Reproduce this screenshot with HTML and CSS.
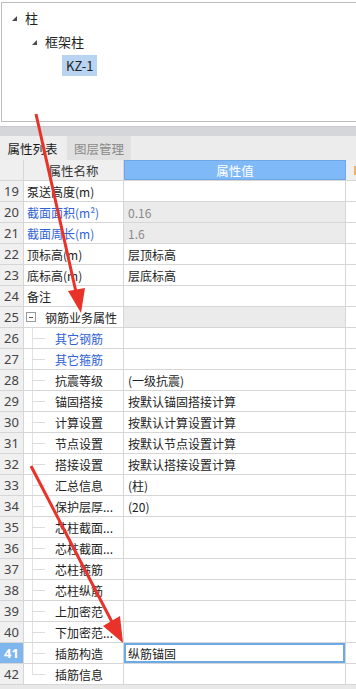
FILE: index.html
```html
<!DOCTYPE html>
<html lang="zh-CN">
<head>
    <meta charset="UTF-8">
    <title>属性列表</title>
    <link rel="stylesheet" href="styles.css">
</head>
<body>
<div class="tree">
    <div class="node"><span class="caret"></span>柱</div>
    <div class="node level1"><span class="caret"></span>框架柱</div>
    <div class="node level2"><span class="selected">KZ-1</span></div>
</div>
<div class="splitter"></div>
<div class="tabs">
    <div class="tab active">属性列表</div>
    <div class="tab">图层管理</div>
</div>
<div class="grid">
    <div class="row head">
        <div class="num"></div>
        <div class="name">属性名称</div>
        <div class="val">属性值</div>
        <div class="pad"><span class="mark"></span></div>
    </div>
    <div class="row"><div class="num">19</div><div class="name">泵送高度(m)</div><div class="val"></div><div class="pad"></div></div>
    <div class="row"><div class="num">20</div><div class="name link">截面面积(m²)</div><div class="val off">0.16</div><div class="pad"></div></div>
    <div class="row"><div class="num">21</div><div class="name link">截面周长(m)</div><div class="val off">1.6</div><div class="pad"></div></div>
    <div class="row"><div class="num">22</div><div class="name">顶标高(m)</div><div class="val">层顶标高</div><div class="pad"></div></div>
    <div class="row"><div class="num">23</div><div class="name">底标高(m)</div><div class="val">层底标高</div><div class="pad"></div></div>
    <div class="row"><div class="num">24</div><div class="name">备注</div><div class="val"></div><div class="pad"></div></div>
    <div class="row"><div class="num">25</div><div class="name group"><span class="toggle"></span>钢筋业务属性</div><div class="val off"></div><div class="pad"></div></div>
    <div class="row"><div class="num">26</div><div class="name child link">其它钢筋</div><div class="val"></div><div class="pad"></div></div>
    <div class="row"><div class="num">27</div><div class="name child link">其它箍筋</div><div class="val"></div><div class="pad"></div></div>
    <div class="row"><div class="num">28</div><div class="name child">抗震等级</div><div class="val">(一级抗震)</div><div class="pad"></div></div>
    <div class="row"><div class="num">29</div><div class="name child">锚固搭接</div><div class="val">按默认锚固搭接计算</div><div class="pad"></div></div>
    <div class="row"><div class="num">30</div><div class="name child">计算设置</div><div class="val">按默认计算设置计算</div><div class="pad"></div></div>
    <div class="row"><div class="num">31</div><div class="name child">节点设置</div><div class="val">按默认节点设置计算</div><div class="pad"></div></div>
    <div class="row"><div class="num">32</div><div class="name child">搭接设置</div><div class="val">按默认搭接设置计算</div><div class="pad"></div></div>
    <div class="row"><div class="num">33</div><div class="name child">汇总信息</div><div class="val">(柱)</div><div class="pad"></div></div>
    <div class="row"><div class="num">34</div><div class="name child">保护层厚...</div><div class="val">(20)</div><div class="pad"></div></div>
    <div class="row"><div class="num">35</div><div class="name child">芯柱截面...</div><div class="val"></div><div class="pad"></div></div>
    <div class="row"><div class="num">36</div><div class="name child">芯柱截面...</div><div class="val"></div><div class="pad"></div></div>
    <div class="row"><div class="num">37</div><div class="name child">芯柱箍筋</div><div class="val"></div><div class="pad"></div></div>
    <div class="row"><div class="num">38</div><div class="name child">芯柱纵筋</div><div class="val"></div><div class="pad"></div></div>
    <div class="row"><div class="num">39</div><div class="name child">上加密范</div><div class="val"></div><div class="pad"></div></div>
    <div class="row"><div class="num">40</div><div class="name child">下加密范...</div><div class="val"></div><div class="pad"></div></div>
    <div class="row current"><div class="num">41</div><div class="name child">插筋构造</div><div class="val">纵筋锚固</div><div class="pad"></div></div>
    <div class="row"><div class="num">42</div><div class="name child last">插筋信息</div><div class="val"></div><div class="pad"></div></div>
</div>
<div class="foot"></div>

<svg class="arrows" width="356" height="689" viewBox="0 0 356 689">
    <line x1="36" y1="114" x2="76" y2="292" stroke="#e8322a" stroke-width="3"/>
    <polygon points="81,313 68,291 85,288" fill="#e8322a"/>
    <line x1="31" y1="466" x2="112" y2="622" stroke="#e8322a" stroke-width="3"/>
    <polygon points="123,643 103,626 120,616" fill="#e8322a"/>
</svg>
</body>
</html>
```

FILE: styles.css
```css
html, body {
    margin: 0;
    padding: 0;
}

body {
    position: relative;
    width: 356px;
    height: 689px;
    overflow: hidden;
    font-family: "Noto Sans CJK SC", "Noto Sans", sans-serif;
    font-size: 12px;
    color: #222;
    background: white;
}

/* tree panel */

.tree {
    box-sizing: border-box;
    height: 120px;
    margin: 2px 0 0 1px;
    padding-top: 2px;
    border: 1px solid #bdbdbd;
    border-right: none;
    font-size: 13px;
}

.node {
    display: flex;
    align-items: center;
    height: 24px;
    padding-left: 10px;
}

.node.level1 {
    padding-left: 30px;
}

.node.level2 {
    padding-left: 60px;
}

.caret {
    width: 0;
    height: 0;
    margin: 2px 8px 0 0;
    border-left: 5px solid transparent;
    border-bottom: 5px solid #4a4a4a;
}

.selected {
    height: 21px;
    line-height: 21px;
    padding: 0 4px;
    background: #b9d4f1;
}

/* tabs */

.splitter {
    height: 10px;
    margin-top: 4px;
    background: #d5d6da;
    border-top: 1px solid #c9cace;
    box-sizing: border-box;
}

.tabs {
    display: flex;
    height: 24px;
    background: #ececec;
    font-size: 12.5px;
}

.tab {
    display: flex;
    align-items: center;
    justify-content: center;
    width: 64px;
    margin-left: 2px;
    background: #e1e1e1;
    color: #8a8a8a;
}

.tab.active {
    width: 65px;
    margin-left: 0;
    background: #eeeeee;
    color: #1a1a1a;
}

/* property grid */

.row {
    display: grid;
    grid-template-columns: 24px 100px 222px 10px;
    box-sizing: border-box;
    height: 21px;
    border-bottom: 1px solid #d6d6d6;
}

.row > div {
    display: flex;
    align-items: center;
    box-sizing: border-box;
    border-right: 1px solid #d6d6d6;
    white-space: nowrap;
    overflow: hidden;
}

.row > .pad {
    border-right: none;
}

.num {
    justify-content: center;
    background: #f0f0f0;
    color: #444;
    font-family: "Noto Sans", sans-serif;
    font-size: 13px;
}

.name {
    position: relative;
    padding-left: 3px;
}

.val {
    padding-left: 4px;
}

.link {
    color: #2f62d6;
}

.val.off {
    background: #ebebeb;
    color: #8a8a8a;
}

.group {
    padding-left: 2px;
}

.toggle {
    position: relative;
    width: 8px;
    height: 8px;
    margin-right: 9px;
    border: 1px solid #9a9a9a;
    background: white;
}

.toggle::after {
    content: "";
    position: absolute;
    left: 2px;
    right: 2px;
    top: 4px;
    height: 1px;
    background: #555;
}

.child {
    padding-left: 31px;
}

.child::before {
    content: "";
    position: absolute;
    left: 8px;
    top: 0;
    bottom: 0;
    border-left: 1px solid #e2e2e2;
}

.child.last::before {
    bottom: 50%;
}

.child::after {
    content: "";
    position: absolute;
    left: 8px;
    top: 50%;
    width: 13px;
    border-top: 1px solid #dcdcdc;
}

.row.head > div {
    justify-content: center;
    background: #efefef;
    color: #333;
    padding: 0;
    font-size: 12.5px;
}

.row.head > .val {
    background: #80b9f7;
    border: 1px solid #6ea6e6;
    color: white;
}

.mark {
    width: 3px;
    height: 9px;
    margin-left: 8px;
    background: #f0b070;
}

.row.current .num {
    background: #80b6ee;
    color: white;
    font-weight: bold;
}

.row.current .val {
    box-shadow: inset 0 0 0 2px #6aaae8;
}

.foot {
    height: 4px;
    background: #e8e8e8;
}

.arrows {
    position: absolute;
    left: 0;
    top: 0;
    pointer-events: none;
}
```
